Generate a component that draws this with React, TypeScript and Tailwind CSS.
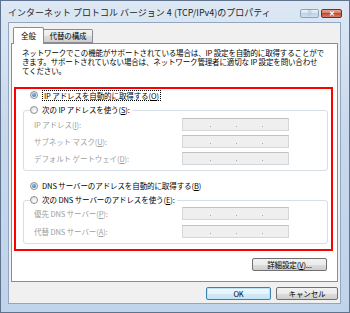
const jp = "font-['Noto_Sans_CJK_JP','Noto_Sans_CJK_SC',sans-serif]"

const winBtn =
  'bg-[linear-gradient(#f2f2f2,#ebebeb_50%,#dddddd_50%,#cfcfcf)] border border-[#707070] rounded-[2px] flex items-center justify-center text-black'

function Radio({ checked }: { checked?: boolean }) {
  return (
    <span className="w-[8px] h-[8px] rounded-full border border-[#8e8f8f] bg-[radial-gradient(circle_at_65%_70%,#ffffff,#d8d8d8)] flex items-center justify-center shrink-0">
      {checked && (
        <span className="w-[4px] h-[4px] rounded-full bg-[radial-gradient(circle_at_40%_35%,#8fc2ec,#1c5a9c)]" />
      )}
    </span>
  )
}

function IpBox() {
  return (
    <div className="w-[107px] h-[13px] border border-[#d6d6d6] border-t-[#c2c2c2] bg-[#efefef] flex items-center pl-[27px] gap-[25px] pt-[3px]">
      <span className="w-[1px] h-[1px] bg-[#a9a9a9]" />
      <span className="w-[1px] h-[1px] bg-[#a9a9a9]" />
      <span className="w-[1px] h-[1px] bg-[#a9a9a9]" />
    </div>
  )
}

function Row({ label }: { label: React.ReactNode }) {
  return (
    <div className="grid grid-cols-[148px_107px] items-center">
      <span className="text-[#a0a0a0] whitespace-nowrap">{label}</span>
      <IpBox />
    </div>
  )
}

function Group({ legend, children }: { legend: React.ReactNode; children: React.ReactNode }) {
  return (
    <fieldset className="ml-[7px] mr-[3px] border border-[#d5dfe5] rounded-[3px]">
      <legend className="ml-[6px] pr-[2px] h-[12px] flex items-center gap-[4px] whitespace-nowrap text-black">
        <Radio />
        <span>{legend}</span>
      </legend>
      {children}
    </fieldset>
  )
}

export default function App() {
  return (
    <div
      className={`${jp} w-[350px] h-[313px] overflow-hidden flex flex-col border border-[#5f738f] bg-[linear-gradient(#dde8f4,#c9d9ec_40%,#bfd3ea)] text-[7.5px] leading-[8px] tracking-[-0.1px]`}
    >
      {/* title bar */}
      <div className="h-[21px] shrink-0 flex items-center pl-[7px] pr-[7px]">
        <span className="flex-1 text-[9px] tracking-[0px] text-[#1e1e1e] whitespace-nowrap pt-[3px]">
          インターネット プロトコル バージョン 4 (TCP/IPv4)のプロパティ
        </span>
        <div className="flex items-center gap-[2px] pt-[3px]">
          <div className="w-[19px] h-[9px] rounded-[2px] border border-[#8ea2bd] bg-[linear-gradient(#eef3fa,#d2deee_50%,#c1d2e8_50%,#d0e0f2)] flex items-center justify-center text-[7px] leading-none font-bold text-[#e8eef6] [text-shadow:0_0_1px_#3d5a80]">
            ?
          </div>
          <div className="w-[21px] h-[9px] rounded-[2px] border border-[#7a2a20] bg-[linear-gradient(#e8a493,#d5735f_50%,#c24a31_50%,#d2806a)] flex items-center justify-center text-[7px] leading-none font-bold text-white">
            ✕
          </div>
        </div>
      </div>

      {/* client area */}
      <div className="flex-1 ml-[7px] mr-[8px] mb-[8px] bg-[#f0f0f0] border border-[#93a6bf] flex flex-col px-[2px] pt-[4px]">
        {/* tabs */}
        <div className="flex items-end pl-[2px] text-black">
          <div className="relative z-10 -mb-[1px] w-[31px] h-[17px] bg-white border border-b-0 border-[#898c95] rounded-t-[2px] flex items-center justify-center pb-[1px]">
            全般
          </div>
          <div className="w-[49px] h-[14px] bg-[linear-gradient(#f3f3f3,#ebebeb_50%,#dddddd_50%,#cfcfcf)] border border-l-0 border-[#898c95] rounded-tr-[2px] flex items-center justify-center">
            代替の構成
          </div>
        </div>

        {/* panel */}
        <div className="h-[239px] bg-white border border-[#898c95] flex flex-col">
          <p className="mt-[4px] ml-[10px] text-black whitespace-nowrap leading-[9px] tracking-[-0.15px]">
            ネットワークでこの機能がサポートされている場合は、IP 設定を自動的に取得することがで
            <br />
            きます。サポートされていない場合は、ネットワーク管理者に適切な IP 設定を問い合わせ
            <br />
            てください。
          </p>

          <div className="mt-[12px] ml-[2px] mr-[4px] h-[164px] border-2 border-[#ff0000] flex flex-col">
            <div className="h-[12px] flex items-center gap-[4px] pl-[14px]">
              <Radio checked />
              <span className="border border-dotted border-black px-[1px] leading-[9px] whitespace-nowrap">
                IP アドレスを自動的に取得する(<u>O</u>)
              </span>
            </div>

            <div className="mt-[3px]">
              <Group legend={<>次の IP アドレスを使う(<u>S</u>):</>}>
                <div className="pl-[10px] pt-[2px] pb-[5px] flex flex-col gap-[4px]">
                  <Row label={<>IP アドレス(<u>I</u>):</>} />
                  <Row label={<>サブネット マスク(<u>U</u>):</>} />
                  <Row label={<>デフォルト ゲートウェイ(<u>D</u>):</>} />
                </div>
              </Group>
            </div>

            <div className="mt-[9px] h-[12px] flex items-center gap-[4px] pl-[14px] whitespace-nowrap">
              <Radio checked />
              <span>
                DNS サーバーのアドレスを自動的に取得する(<u>B</u>)
              </span>
            </div>

            <div className="mt-[2px]">
              <Group legend={<>次の DNS サーバーのアドレスを使う(<u>E</u>):</>}>
                <div className="pl-[10px] pt-[1px] pb-[5px] flex flex-col gap-[5px]">
                  <Row label={<>優先 DNS サーバー(<u>P</u>):</>} />
                  <Row label={<>代替 DNS サーバー(<u>A</u>):</>} />
                </div>
              </Group>
            </div>
          </div>

          <div className="mt-[7px] flex justify-end pr-[10px]">
            <div className={`${winBtn} w-[75px] h-[13px]`}>
              詳細設定(<u>V</u>)...
            </div>
          </div>
        </div>

        {/* dialog buttons */}
        <div className="mt-[5px] flex justify-end gap-[5px]">
          <div className="w-[65px] h-[13px] rounded-[2px] border border-[#3c7fb1] bg-[linear-gradient(#f4fafe,#e6f3fb_50%,#d4ebf8_50%,#c6e3f5)] shadow-[inset_0_0_0_1px_#bfe3f7] flex items-center justify-center text-black">
            OK
          </div>
          <div className={`${winBtn} w-[62px] h-[13px]`}>キャンセル</div>
        </div>
      </div>
    </div>
  )
}
